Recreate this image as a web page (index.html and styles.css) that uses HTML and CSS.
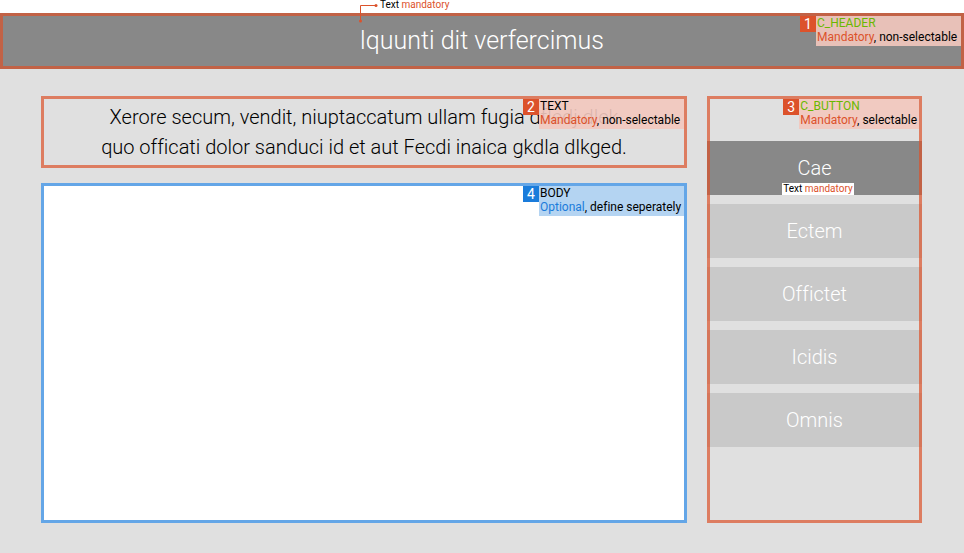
FILE: index.html
```html
<!DOCTYPE html>
<html lang="en">
<head>
<meta charset="utf-8">
<meta name="viewport" content="width=device-width, initial-scale=1">
<title>lquunti dit verfercimus</title>
<link rel="stylesheet" href="styles.css">
</head>
<body>
<header class="header region">
  <h1 class="title">lquunti dit verfercimus</h1>
  <div class="pointer">
    <svg class="pointer-line" width="20" height="20" viewBox="0 0 20 20" aria-hidden="true">
      <path d="M2.500 18V2.500H18" fill="none" stroke="#dc522b"/>
      <circle cx="2.500" cy="18" r="1.500" fill="#dc522b"/>
      <circle cx="18" cy="2.500" r="1.500" fill="#dc522b"/>
    </svg>
    <span class="hint">Text <em>mandatory</em></span>
  </div>
  <div class="callout">
    <b class="number">1</b>
    <p class="note wide"><span class="component">C_HEADER</span><br><em>Mandatory</em>, non-selectable</p>
  </div>
</header>
<main class="page">
  <div class="content">
    <section class="text region">
      <p class="copy">Xerore secum, vendit, niuptaccatum ullam fugia dfledj dlek<br>quo officati dolor sanduci id et aut Fecdi inaica gkdla dlkged.</p>
      <div class="callout">
        <b class="number">2</b>
        <p class="note wide">TEXT<br><em>Mandatory</em>, non-selectable</p>
      </div>
    </section>
    <section class="body region optional">
      <div class="callout">
        <b class="number">4</b>
        <p class="note wide">BODY<br><em>Optional</em>, define seperately</p>
      </div>
    </section>
  </div>
  <aside class="side region">
    <div class="buttons">
      <button class="button selected" type="button">Cae<span class="hint tag">Text <em>mandatory</em></span></button>
      <button class="button" type="button">Ectem</button>
      <button class="button" type="button">Offictet</button>
      <button class="button" type="button">Icidis</button>
      <button class="button" type="button">Omnis</button>
    </div>
    <div class="callout">
      <b class="number">3</b>
      <p class="note"><span class="component">C_BUTTON</span><br><em>Mandatory</em>, selectable</p>
    </div>
  </aside>
</main>
</body>
</html>
```
FILE: styles.css
```css
* {
  box-sizing: border-box;
}

body {
  --accent: #dc522b;
  --outline: rgba(220, 82, 43, 0.7);
  --note: rgba(243, 200, 190, 0.9);
  display: flex;
  flex-direction: column;
  min-height: 100vh;
  margin: 0;
  padding-top: 13px;
  background: #fff;
  color: #000;
  font-family: Roboto, "Noto Sans", sans-serif;
  font-variant-ligatures: none;
}

h1,
p {
  margin: 0;
}

em {
  color: var(--accent);
  font-style: normal;
}

/* Translucent frame drawn over everything in a region */
.region {
  position: relative;
}

.region::after {
  content: "";
  position: absolute;
  inset: 0;
  border: 3px solid var(--outline);
  pointer-events: none;
}

.optional {
  --accent: #1a7cdb;
  --outline: rgba(26, 124, 219, 0.68);
  --note: rgba(172, 207, 241, 0.9);
}

.header {
  display: flex;
  justify-content: center;
  align-items: center;
  height: 56px;
  background: #888;
}

.title {
  color: #fff;
  font-size: 25px;
  font-weight: 300;
  line-height: 30px;
}

.page {
  display: grid;
  grid-template-columns: 1fr 215px;
  gap: 20px;
  flex: 1;
  padding: 27px 42px 30px 41px;
  background: #e0e0e0;
}

.content {
  display: flex;
  flex-direction: column;
  gap: 15px;
}

.text {
  padding: 6px;
}

.copy {
  font-size: 20px;
  font-weight: 300;
  line-height: 30px;
  text-align: center;
}

.body {
  flex: 1;
  background: #fff;
}

.buttons {
  display: flex;
  flex-direction: column;
  gap: 9px;
  padding-top: 45px;
}

.button {
  position: relative;
  height: 54px;
  padding: 0;
  border: 0;
  background: #c9c9c9;
  color: #fff;
  font-family: inherit;
  font-size: 20px;
  font-weight: 300;
  font-variant-ligatures: none;
  line-height: 30px;
}

.selected {
  background: #888;
}

.callout {
  position: absolute;
  top: 3px;
  right: 3px;
  display: flex;
  align-items: flex-start;
}

.number {
  width: 16px;
  background: var(--accent);
  color: #fff;
  font-size: 14px;
  font-weight: 400;
  line-height: 16px;
  text-align: center;
}

.note {
  padding: 0 2px 2px 1px;
  background: var(--note);
  font-size: 12px;
  line-height: 14px;
  white-space: nowrap;
}

.wide {
  min-width: 145px;
}

.component {
  color: #69b800;
}

.hint {
  color: #000;
  font-size: 10px;
  font-weight: 400;
  line-height: 12px;
  white-space: nowrap;
}

.tag {
  position: absolute;
  bottom: 0;
  left: 35%;
  padding: 0 1px;
  background: #fff;
}

.pointer {
  position: absolute;
  top: -10px;
  left: calc(50% - 124px);
  z-index: 1;
  display: flex;
  gap: 2px;
}

.pointer .hint {
  margin-top: -4px;
}
```
